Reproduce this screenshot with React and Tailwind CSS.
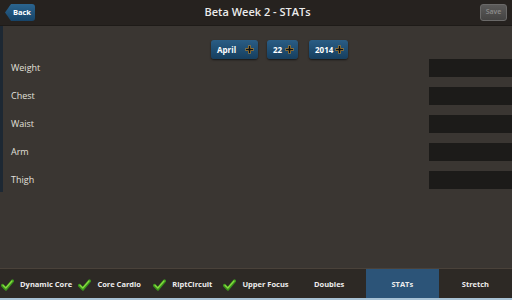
import React from 'react';

function Check() {
    return (
        <svg width="13" height="12" viewBox="0 0 13 12" className="shrink-0">
            <path d="M1.5 6.5 L4.8 10 L11.5 2" fill="none" stroke="#3a941c" strokeWidth="3.2" strokeLinecap="round" strokeLinejoin="round" />
            <path d="M2 6.2 L4.8 9 L11 2" fill="none" stroke="#86d93e" strokeWidth="1.3" strokeLinecap="round" strokeLinejoin="round" />
        </svg>
    );
}

function Plus() {
    return (
        <svg width="9" height="9" viewBox="0 0 9 9" className="shrink-0">
            <path d="M4.5 0.5 V8.5 M0.5 4.5 H8.5" stroke="#b48a3a" strokeWidth="3" />
            <path d="M4.5 1 V8 M1 4.5 H8" stroke="#111" strokeWidth="1.6" />
        </svg>
    );
}

function DateButton({ label, width }) {
    return (
        <div className={`${width} h-[19px] flex items-center justify-between pl-[6px] pr-[4px] rounded-[3px] bg-gradient-to-b from-[#2a5d85] to-[#163f5f] shadow-[0_1px_2px_rgba(0,0,0,0.6)] text-white text-[8px] font-bold`}>
            <span>{label}</span>
            <Plus />
        </div>
    );
}

const rows = ["Weight", "Chest", "Waist", "Arm", "Thigh"];

const tabs = [
    { name: "Dynamic Core", done: true },
    { name: "Core Cardio", done: true },
    { name: "RiptCircuit", done: true },
    { name: "Upper Focus", done: true },
    { name: "Doubles", done: false },
    { name: "STATs", done: false, active: true },
    { name: "Stretch", done: false },
];

export default function App() {
    return (
        <div className="w-[512px] h-[300px] flex flex-col bg-[#3a3632] overflow-hidden" style={{ fontFamily: '"Open Sans", "Noto Sans", sans-serif' }}>
            {/* header */}
            <div className="h-[26px] shrink-0 bg-[#26221f] flex items-center justify-between px-[5px] border-b border-[#1e1b18]">
                <div className="h-[17px] w-[30px] flex items-center justify-end pr-[4px] rounded-r-[3px] bg-gradient-to-b from-[#2b6590] to-[#174468] text-white text-[7.5px] font-bold [clip-path:polygon(6px_0,100%_0,100%_100%,6px_100%,0_50%)]">
                    Back
                </div>
                <div className="text-[#ececec] text-[11px] font-semibold">Beta Week 2 - STATs</div>
                <div className="h-[17px] w-[27px] rounded-[3px] bg-gradient-to-b from-[#5b5a59] to-[#444342] border border-[#6a6968] flex items-center justify-center text-[#8c8b8a] text-[7px] font-semibold">
                    Save
                </div>
            </div>

            {/* content */}
            <div className="flex-1 flex">
                <div className="w-[3px] h-[166px] bg-[#1d2833] shrink-0" />
                <div className="flex-1 flex flex-col">
                    <div className="flex pt-[14px] pl-[208px] gap-[9px]">
                        <DateButton label="April" width="w-[47px]" />
                        <div className="flex gap-[11px]">
                            <DateButton label="22" width="w-[31px]" />
                            <DateButton label="2014" width="w-[39px]" />
                        </div>
                    </div>
                    <div className="flex flex-col gap-[10px]">
                        {rows.map((r) => (
                            <div key={r} className="h-[18px] flex items-center justify-between">
                                <span className="pl-[8px] text-[#e2e0dc] text-[9px]">{r}</span>
                                <div className="w-[83px] h-[18px] bg-[#1c1b19]" />
                            </div>
                        ))}
                    </div>
                </div>
            </div>

            {/* tab bar */}
            <div className="h-[32px] shrink-0 border-t border-[#4a423a] bg-[#2d2925] grid grid-cols-7 border-b-2 border-b-[#a9c3d6]">
                {tabs.map((t) => (
                    <div key={t.name} className={`flex items-center justify-center gap-[6px] pt-[2px] ${t.active ? "bg-[#2c5478]" : ""} text-[#ededed] text-[7.5px] font-bold whitespace-nowrap`}>
                        {t.done && <Check />}
                        <span>{t.name}</span>
                    </div>
                ))}
            </div>
        </div>
    );
}
